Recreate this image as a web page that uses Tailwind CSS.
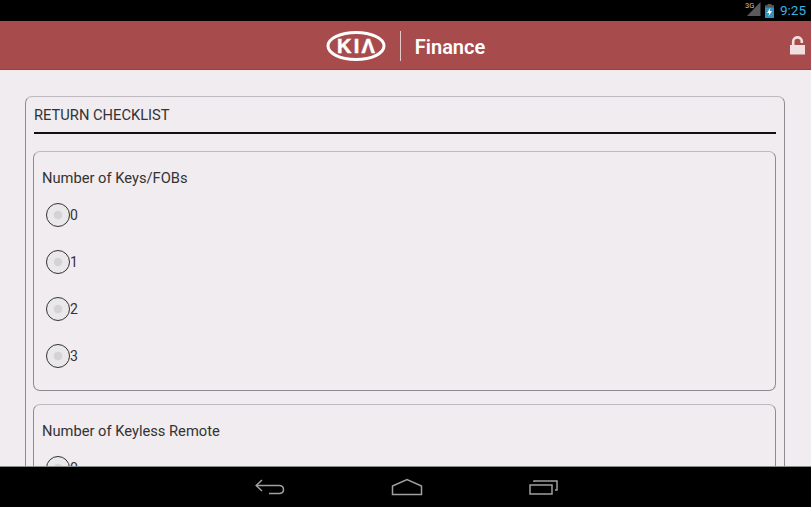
<!DOCTYPE html>
<html lang="en">
<head>
    <meta charset="UTF-8">
    <meta name="viewport" content="width=device-width, initial-scale=1.0">
    <title>Return Checklist</title>
    <script src="https://cdn.jsdelivr.net/npm/@tailwindcss/browser@4"></script>
</head>
<body class="w-[811px] h-[507px] overflow-hidden flex flex-col bg-[#f0ecf0] font-[Roboto,sans-serif] text-[#333]">
    <!-- status bar -->
    <div class="h-[21px] shrink-0 bg-black flex items-center justify-end pr-[5px]">
        <svg width="16" height="16" viewBox="0 0 16 16" class="mb-[3px]">
            <polygon points="15.5,1 15.5,15 2,15" fill="#5a5a5a"/>
            <text x="0" y="7" font-size="7.5" font-family="Roboto" fill="#c4c4c4">3G</text>
        </svg>
        <svg width="9" height="14" viewBox="0 0 9 14" class="ml-[4px] mr-[6px]">
            <rect x="2.5" y="0" width="4" height="2" fill="#555"/>
            <rect x="0" y="1.5" width="9" height="12.5" fill="#2f93bd"/>
            <rect x="0" y="1.5" width="9" height="2" fill="#555"/>
            <path d="M5.5 3.5 L2 9 H4.2 L3.5 12.5 L7 7 H4.8 Z" fill="#fff"/>
        </svg>
        <span class="text-[13.5px] leading-none text-[#33b5e5]">9:25</span>
    </div>

    <!-- header -->
    <header class="relative h-[49px] shrink-0 bg-[#a84b4d] border-b border-[#963f40] flex items-center justify-center">
        <div class="flex items-center mt-[1px]">
            <svg width="60" height="32" viewBox="0 0 60 32">
                <ellipse cx="30" cy="16" rx="28" ry="13.5" fill="none" stroke="#fff" stroke-width="3"/>
                <text x="31" y="23" text-anchor="middle" font-size="20" font-weight="700" letter-spacing="2.2" stroke="#fff" stroke-width="0.5" font-family="Liberation Sans" fill="#fff">KIΛ</text>
            </svg>
            <div class="w-px h-[30px] bg-[#e6c9c9] ml-[14px] mr-[14px]"></div>
            <span class="text-[20px] leading-none font-semibold text-white mt-[3px]">Finance</span>
        </div>
        <svg class="absolute right-[6px] top-[15px]" width="15" height="19" viewBox="0 0 15 19">
            <path d="M3.2 9 V5.5 C3.2 0 11.8 0 11.8 5.5 V7" fill="none" stroke="#f1dfe0" stroke-width="2.6"/>
            <rect x="0" y="9" width="15" height="9.5" fill="#f1dfe0"/>
        </svg>
    </header>

    <!-- content -->
    <main class="flex-1 min-h-0 overflow-hidden pl-[25px] pr-[26px] pt-[26px]">
        <section class="border border-[#8f8b90] border-t-[#bdb9be] rounded-[7px] px-[8px] pt-[8px] h-[500px]">
            <h1 class="text-[14.7px] leading-[20px] font-normal h-[27px]">RETURN CHECKLIST</h1>
            <div class="h-[2px] bg-[#111] mb-[17px]"></div>

            <div class="-ml-[1px] border border-[#8f8b90] border-t-[#bdb9be] rounded-[7px] h-[240px] px-[8px] pt-[16px] mb-[13px]">
                <p class="text-[14.7px] leading-[20px]">Number of Keys/FOBs</p>
                <div class="mt-[9px] flex flex-col gap-[11px] pl-[4px]">
                    <label class="flex items-center h-[36px] text-[14px]"><span class="w-[24px] h-[24px] rounded-full border border-[#333] bg-[#ebe8eb] flex items-center justify-center"><span class="w-[8px] h-[8px] rounded-full bg-[#d4d2d4] shadow-[0_0_2px_#dedcde]"></span></span><span>0</span></label>
                    <label class="flex items-center h-[36px] text-[14px]"><span class="w-[24px] h-[24px] rounded-full border border-[#333] bg-[#ebe8eb] flex items-center justify-center"><span class="w-[8px] h-[8px] rounded-full bg-[#d4d2d4] shadow-[0_0_2px_#dedcde]"></span></span><span>1</span></label>
                    <label class="flex items-center h-[36px] text-[14px]"><span class="w-[24px] h-[24px] rounded-full border border-[#333] bg-[#ebe8eb] flex items-center justify-center"><span class="w-[8px] h-[8px] rounded-full bg-[#d4d2d4] shadow-[0_0_2px_#dedcde]"></span></span><span>2</span></label>
                    <label class="flex items-center h-[36px] text-[14px]"><span class="w-[24px] h-[24px] rounded-full border border-[#333] bg-[#ebe8eb] flex items-center justify-center"><span class="w-[8px] h-[8px] rounded-full bg-[#d4d2d4] shadow-[0_0_2px_#dedcde]"></span></span><span>3</span></label>
                </div>
            </div>

            <div class="-ml-[1px] border border-[#8f8b90] border-t-[#bdb9be] rounded-[7px] h-[240px] px-[8px] pt-[16px]">
                <p class="text-[14.7px] leading-[20px]">Number of Keyless Remote</p>
                <div class="mt-[9px] flex flex-col gap-[11px] pl-[4px]">
                    <label class="flex items-center h-[36px] text-[14px]"><span class="w-[24px] h-[24px] rounded-full border border-[#333] bg-[#ebe8eb] flex items-center justify-center"><span class="w-[8px] h-[8px] rounded-full bg-[#d4d2d4] shadow-[0_0_2px_#dedcde]"></span></span><span>0</span></label>
                </div>
            </div>
        </section>
    </main>

    <!-- nav bar -->
    <nav class="relative z-10 h-[41px] shrink-0 bg-black border-t border-[#8a8a8a] flex items-center justify-center gap-[106px] pl-[2px]">
        <svg width="30" height="18" viewBox="0 0 30 18" fill="none" stroke="#a0a0a0" stroke-width="1.5">
            <path d="M1 7.5 H24 C30 7.5 30 15.5 24 15.5 H14"/>
            <path d="M7 2 L1.2 7.5 L7 13"/>
        </svg>
        <svg width="32" height="18" viewBox="0 0 32 18" fill="none" stroke="#a0a0a0" stroke-width="1.5">
            <path d="M1.5 16.5 V8 L16 1.5 L30.5 8 V16.5 Z"/>
        </svg>
        <svg width="30" height="18" viewBox="0 0 30 18" fill="none" stroke="#a0a0a0" stroke-width="1.5">
            <rect x="1" y="7" width="22" height="9"/>
            <path d="M5 4 V3 H28 V12 H26"/>
        </svg>
    </nav>
</body>
</html>
